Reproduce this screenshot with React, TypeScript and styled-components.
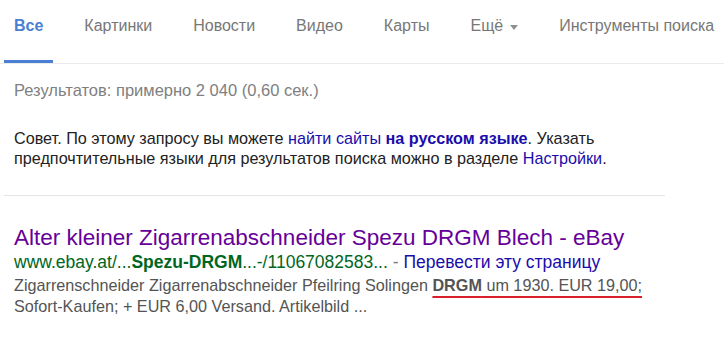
import React from "react";
import styled, { createGlobalStyle } from "styled-components";

const GlobalStyle = createGlobalStyle`
  body {
    margin: 0;
    background: #fff;
    font-family: "Liberation Sans", Arial, sans-serif;
  }
`;

const Page = styled.div`
  width: 724px;
  height: 337px;
  overflow: hidden;
  background: #fff;
`;

const TabBar = styled.div`
  display: flex;
  align-items: flex-end;
  height: 63px;
  padding-left: 4px;
  border-bottom: 1px solid #ebebeb;
`;

const Tab = styled.div<{ $active?: boolean }>`
  display: flex;
  align-items: center;
  gap: 7px;
  height: 60px;
  padding: 0 10px 11px;
  margin-right: 21px;
  box-sizing: border-box;
  border-bottom: 3px solid ${(p) => (p.$active ? "#4a80d4" : "transparent")};
  font-size: 16px;
  font-weight: ${(p) => (p.$active ? "bold" : "normal")};
  color: ${(p) => (p.$active ? "#4a80d4" : "#777")};
  white-space: nowrap;
`;

const Caret = styled.span`
  width: 0;
  height: 0;
  border-left: 4px solid transparent;
  border-right: 4px solid transparent;
  border-top: 5px solid #909090;
  margin-top: 2px;
`;

const Body = styled.div`
  padding: 16px 0 0 14px;
`;

const Stats = styled.div`
  font-size: 16.5px;
  color: #808080;
  line-height: 20px;
`;

const Tip = styled.div`
  margin-top: 28px;
  font-size: 16.2px;
  line-height: 20px;
  color: #222;
  width: 660px;
`;

const Link = styled.a<{ $bold?: boolean }>`
  color: #1a0dab;
  text-decoration: none;
  font-weight: ${(p) => (p.$bold ? "bold" : "normal")};
`;

const Separator = styled.div`
  margin: 27px 0 0 -10px;
  width: 661px;
  height: 1px;
  background: #e5e5e5;
`;

const Result = styled.div`
  padding: 29px 0 0 14px;
`;

const Title = styled.div`
  font-size: 22.5px;
  line-height: 26px;
  color: #660099;
  white-space: nowrap;
`;

const Url = styled.div`
  font-size: 17.5px;
  line-height: 22px;
  color: #006621;
  white-space: nowrap;
`;

const Translate = styled.span`
  color: #1a0dab;
`;

const Sep = styled.span`
  color: #808080;
`;

const Snippet = styled.div`
  margin-top: 2px;
  font-size: 16.2px;
  line-height: 21px;
  color: #545454;
  width: 660px;
`;

const Marked = styled.span`
  text-decoration: underline;
  text-decoration-color: #d9202a;
  text-decoration-thickness: 2px;
  text-underline-offset: 5px;
`;

const tabs = ["Картинки", "Новости", "Видео", "Карты"];

export default function App() {
  return (
    <Page>
      <GlobalStyle />
      <TabBar>
        <Tab $active>Все</Tab>
        {tabs.map((t) => (
          <Tab key={t}>{t}</Tab>
        ))}
        <Tab>
          Ещё
          <Caret />
        </Tab>
        <Tab>Инструменты поиска</Tab>
      </TabBar>
      <Body>
        <Stats>Результатов: примерно 2 040 (0,60 сек.)</Stats>
        <Tip>
          Совет. По этому запросу вы можете <Link href="#">найти сайты</Link>{" "}
          <Link href="#" $bold>
            на русском языке
          </Link>
          . Указать
          <br />
          предпочтительные языки для результатов поиска можно в разделе{" "}
          <Link href="#">Настройки</Link>.
        </Tip>
        <Separator />
      </Body>
      <Result>
        <Title>Alter kleiner Zigarrenabschneider Spezu DRGM Blech - eBay</Title>
        <Url>
          www.ebay.at/...<b>Spezu-DRGM</b>...-/11067082583...{" "}
          <Sep>-</Sep> <Translate>Перевести эту страницу</Translate>
        </Url>
        <Snippet>
          Zigarrenschneider Zigarrenabschneider Pfeilring Solingen{" "}
          <Marked>
            <b>DRGM</b> um 1930. EUR 19,00;
          </Marked>
          <br />
          Sofort-Kaufen; + EUR 6,00 Versand. Artikelbild ...
        </Snippet>
      </Result>
    </Page>
  );
}
